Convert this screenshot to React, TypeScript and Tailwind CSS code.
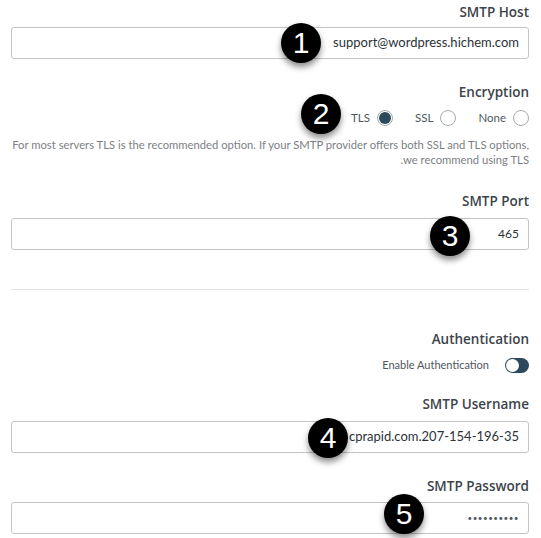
import React from 'react';

const font = { fontFamily: 'Lato, "Open Sans", sans-serif' };

function Badge({ n, className }: { n: number; className: string }) {
  return (
    <div
      className={`absolute w-[40px] h-[40px] rounded-full bg-black text-white flex items-center justify-center shadow-[0_4px_6px_rgba(0,0,0,0.45)] ${className}`}
      style={{ fontFamily: '"Liberation Sans", Arial, sans-serif' }}
    >
      <span className="text-[30px] leading-none">{n}</span>
    </div>
  );
}

function Label({ children, className = '' }: { children: React.ReactNode; className?: string }) {
  return (
    <div
      className={`h-[20px] leading-[20px] text-right text-[13.5px] font-semibold text-[#3c434a] ${className}`}
      style={{ fontFamily: '"Open Sans", sans-serif' }}
    >
      {children}
    </div>
  );
}

function Field({ value, className = 'text-[13px]' }: { value: string; className?: string }) {
  return (
    <div
      className={`h-[32px] border border-[#c3c4c7] rounded-[3px] flex items-center justify-end px-[9px] text-[#2c3338] ${className}`}
    >
      {value}
    </div>
  );
}

function Radio({ label, checked = false }: { label: string; checked?: boolean }) {
  return (
    <div className="flex items-center gap-[7px]">
      <span className="text-[11.5px] text-[#50575e]">{label}</span>
      <span className="w-[16px] h-[16px] rounded-full border border-[#a7aaad] bg-white flex items-center justify-center">
        {checked && <span className="w-[12px] h-[12px] rounded-full bg-[#2c4a5c]" />}
      </span>
    </div>
  );
}

export default function App() {
  return (
    <div className="relative w-[541px] h-[538px] bg-white overflow-hidden pl-[11px] pr-[12px]" style={font}>
      <Label className="mt-[2px] mb-[5px]">SMTP Host</Label>
      <Field value="support@wordpress.hichem.com" />

      <Label className="mt-[23px]">Encryption</Label>
      <div className="mt-[6px] h-[20px] flex items-center justify-end gap-[22px]">
        <Radio label="TLS" checked />
        <Radio label="SSL" />
        <Radio label="None" />
      </div>
      <div className="mt-[9px] text-right text-[11.25px] leading-[15px] text-[#7c8085] whitespace-nowrap">
        <div>For most servers TLS is the recommended option. If your SMTP provider offers both SSL and TLS options,</div>
        <div>.we recommend using TLS</div>
      </div>

      <Label className="mt-[24px] mb-[7px]">SMTP Port</Label>
      <Field value="465" className="text-[12px]" />

      <div className="mt-[39px] h-px bg-[#e5e5e5]" />

      <Label className="mt-[39px]">Authentication</Label>
      <div className="mt-[8px] h-[16px] flex items-center justify-end gap-[16px]">
        <span className="text-[11px] text-[#50575e]">Enable Authentication</span>
        <span className="w-[24px] h-[15px] rounded-full bg-[#2c4a5c] flex items-center p-[1px]">
          <span className="w-[13px] h-[13px] rounded-full bg-white" />
        </span>
      </div>

      <Label className="mt-[21px] mb-[7px]">SMTP Username</Label>
      <Field value="cprapid.com.207-154-196-35" />

      <Label className="mt-[23px] mb-[6px]">SMTP Password</Label>
      <Field value="••••••••••" className="text-[8px] tracking-[0.5px] text-[#50575e]" />

      <Badge n={1} className="left-[281px] top-[23px]" />
      <Badge n={2} className="left-[301px] top-[94px]" />
      <Badge n={3} className="left-[430px] top-[216px]" />
      <Badge n={4} className="left-[308px] top-[418px]" />
      <Badge n={5} className="left-[384px] top-[494px]" />
    </div>
  );
}
